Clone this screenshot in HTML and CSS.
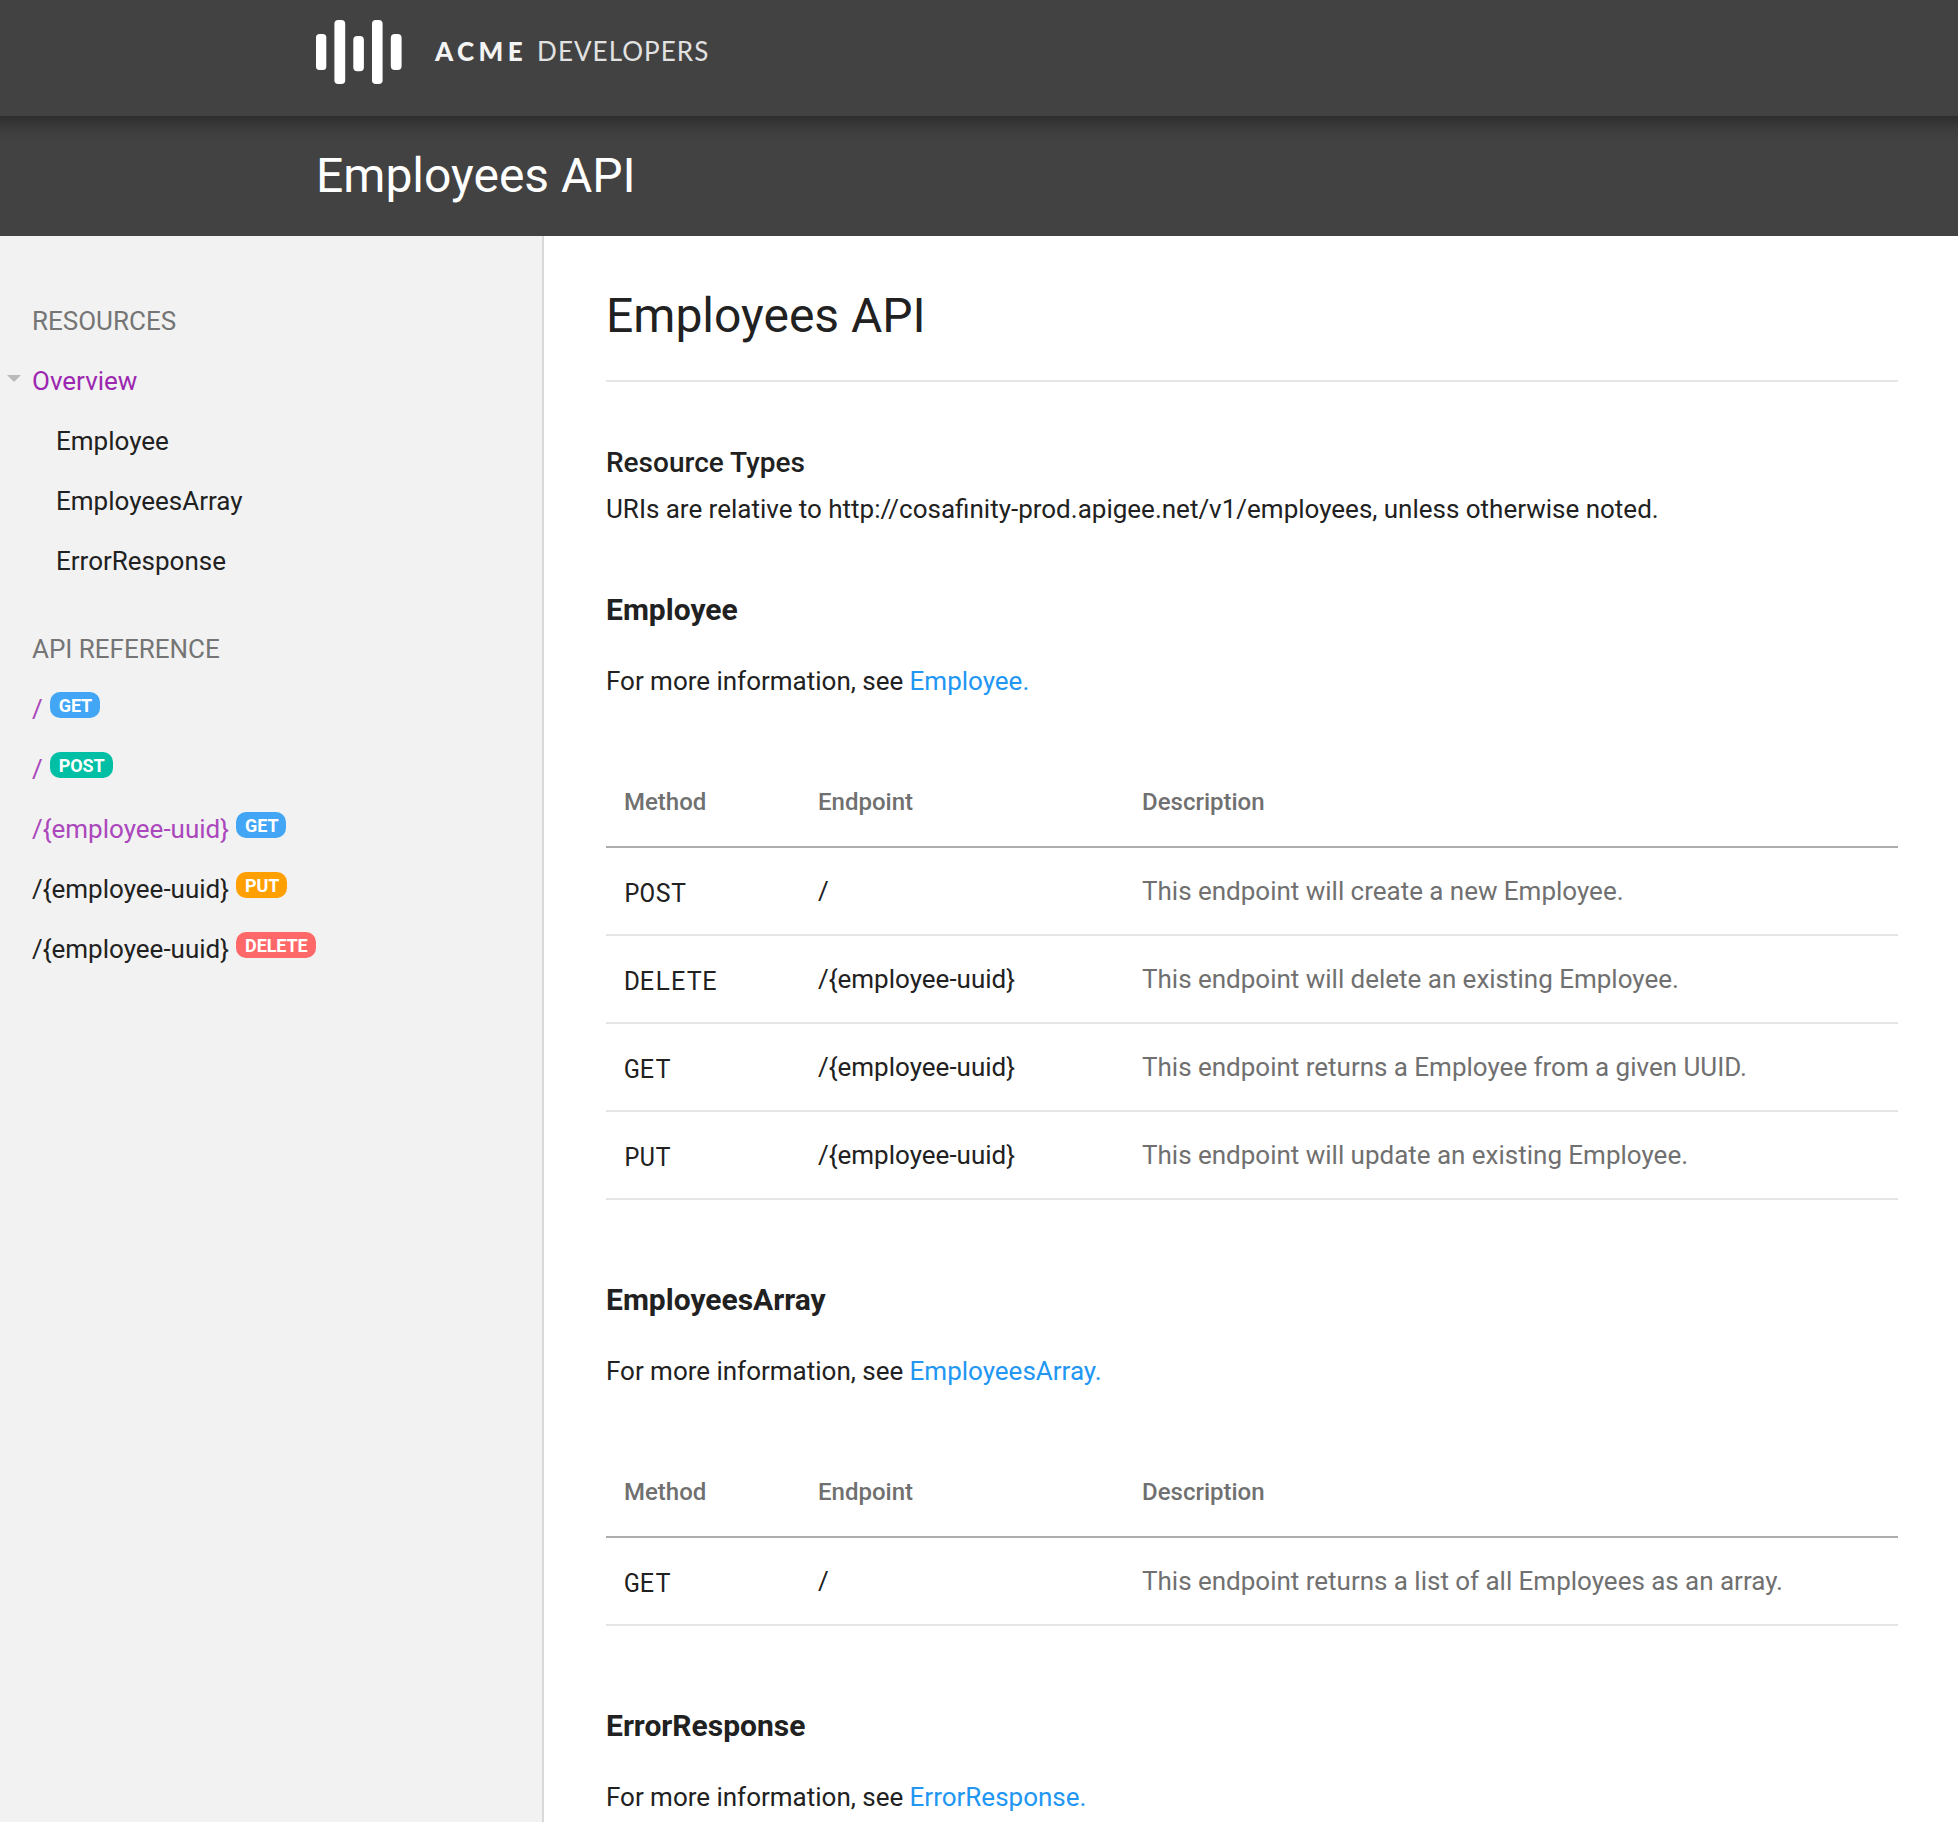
FILE: index.html
```html
<!DOCTYPE html>
<html lang="en">
<head>
<meta charset="utf-8">
<title>Employees API</title>
<link rel="stylesheet" href="styles.css">
</head>
<body>
<header class="topbar">
  <svg class="logo-mark" width="86" height="64" viewBox="0 0 86 64" fill="#fff" aria-hidden="true">
    <rect x="0" y="14" width="10.3" height="36" rx="3.5"/>
    <rect x="18.4" y="0" width="10.8" height="64" rx="3.8"/>
    <rect x="37.3" y="16" width="10.6" height="35.3" rx="4"/>
    <rect x="56" y="0" width="10.6" height="64" rx="3.8"/>
    <rect x="74.8" y="14" width="10.8" height="36" rx="4"/>
  </svg>
  <div class="wordmark"><span class="wordmark-brand">ACME</span><span class="wordmark-name">DEVELOPERS</span></div>
</header>
<div class="banner"><div class="banner-title">Employees API</div></div>
<div class="layout">
  <nav class="sidebar">
    <div class="nav-heading">RESOURCES</div>
    <a class="nav-item nav-active"><svg class="caret" width="14" height="7" viewBox="0 0 14 7" aria-hidden="true"><path d="M0 0H14L7 7Z" fill="#b9b9b9"/></svg>Overview</a>
    <a class="nav-item nav-sub">Employee</a>
    <a class="nav-item nav-sub">EmployeesArray</a>
    <a class="nav-item nav-sub">ErrorResponse</a>
    <div class="nav-heading nav-heading-api">API REFERENCE</div>
    <a class="nav-item nav-visited"><span class="path">/</span><span class="badge badge-get">GET</span></a>
    <a class="nav-item nav-visited"><span class="path">/</span><span class="badge badge-post">POST</span></a>
    <a class="nav-item nav-visited"><span class="path">/{employee-uuid}</span><span class="badge badge-get">GET</span></a>
    <a class="nav-item"><span class="path">/{employee-uuid}</span><span class="badge badge-put">PUT</span></a>
    <a class="nav-item"><span class="path">/{employee-uuid}</span><span class="badge badge-delete">DELETE</span></a>
  </nav>
  <main class="content">
    <h1 class="title">Employees API</h1>
    <h2 class="types">Resource Types</h2>
    <p class="note">URIs are relative to http://cosafinity-prod.apigee.net/v1/employees, unless otherwise noted.</p>

    <section class="resource">
      <h3 class="resource-name">Employee</h3>
      <p class="more">For more information, see <a class="link">Employee.</a></p>
      <table class="methods">
        <thead><tr><th class="col-method">Method</th><th class="col-endpoint">Endpoint</th><th>Description</th></tr></thead>
        <tbody>
          <tr><td class="verb">POST</td><td>/</td><td class="desc">This endpoint will create a new Employee.</td></tr>
          <tr><td class="verb">DELETE</td><td>/{employee-uuid}</td><td class="desc">This endpoint will delete an existing Employee.</td></tr>
          <tr><td class="verb">GET</td><td>/{employee-uuid}</td><td class="desc">This endpoint returns a Employee from a given UUID.</td></tr>
          <tr><td class="verb">PUT</td><td>/{employee-uuid}</td><td class="desc">This endpoint will update an existing Employee.</td></tr>
        </tbody>
      </table>
    </section>

    <section class="resource">
      <h3 class="resource-name">EmployeesArray</h3>
      <p class="more">For more information, see <a class="link">EmployeesArray.</a></p>
      <table class="methods">
        <thead><tr><th class="col-method">Method</th><th class="col-endpoint">Endpoint</th><th>Description</th></tr></thead>
        <tbody>
          <tr><td class="verb">GET</td><td>/</td><td class="desc">This endpoint returns a list of all Employees as an array.</td></tr>
        </tbody>
      </table>
    </section>

    <section class="resource">
      <h3 class="resource-name">ErrorResponse</h3>
      <p class="more">For more information, see <a class="link">ErrorResponse.</a></p>
    </section>
  </main>
</div>
</body>
</html>
```
FILE: styles.css
```css
* { box-sizing: border-box; }

body {
  margin: 0;
  height: 1822px;
  overflow: hidden;
  display: flex;
  flex-direction: column;
  background: #fff;
  color: #212121;
  font: 26px/40px Roboto, sans-serif;
  word-spacing: -.1px;
}

h1, h2, h3, p { margin: 0; }

/* Header */
.topbar {
  flex: none;
  height: 116px;
  padding: 20px 0 0 316px;
  display: flex;
  align-items: flex-start;
  background: #424242;
}
.logo-mark { flex: none; }
.wordmark {
  display: flex;
  gap: 10px;
  margin: 11px 0 0 33px;
  color: #f4f4f4;
  font: 26px/40px Lato, sans-serif;
}
.wordmark-brand { font-weight: 900; letter-spacing: 4.4px; }
.wordmark-name { color: #e2e2e2; letter-spacing: 1.05px; }

.banner {
  flex: none;
  height: 120px;
  padding: 32px 0 0 316px;
  background: linear-gradient(#2e2e2e, #333 5px, #3a3a3a 11px, #3f3f3f 18px, #424242 28px);
  color: #fff;
}
.banner-title { font-size: 48px; line-height: 56px; }

.layout {
  flex: 1;
  min-height: 0;
  display: flex;
}

/* Sidebar */
.sidebar {
  flex: none;
  width: 544px;
  padding: 55px 0 0 32px;
  background: #f2f2f2;
  border-right: 2px solid #d9d9d9;
}
.nav-heading { line-height: 60px; color: #757575; }
.nav-heading-api { margin-top: 28px; }
.nav-item {
  position: relative;
  display: flex;
  align-items: center;
  height: 60px;
}
.nav-active { color: #9c27b0; }
.nav-visited { color: #ab47bc; }
.nav-sub { padding-left: 24px; }
.caret { position: absolute; left: -25px; top: 24px; }
.badge {
  height: 26px;
  margin: 0 0 8px 7px;
  padding: 0 8px 0 9px;
  border-radius: 10px;
  color: #fff;
  font-size: 18px;
  font-weight: 700;
  letter-spacing: -.1px;
  line-height: 27px;
}
.badge-get { background: #42a5f5; }
.badge-post { background: #00bfa5; }
.badge-put { background: #ffa000; }
.badge-delete { background: #ff6868; }

/* Main column */
.content {
  flex: 1;
  padding: 52px 60px 0 62px;
}
.title {
  padding-bottom: 36px;
  border-bottom: 2px solid #e5e5e5;
  font-size: 48px;
  font-weight: 400;
  line-height: 56px;
}
.types {
  margin-top: 61px;
  font-size: 28px;
  font-weight: 500;
  line-height: 40px;
}
.note { margin-top: 6px; }
.resource { margin-top: 80px; }
.note + .resource { margin-top: 61px; }
.resource-name {
  font-size: 30px;
  font-weight: 700;
  line-height: 40px;
}
.more { margin-top: 31px; }
.link { color: #2196f3; }

.methods {
  width: 100%;
  margin-top: 57px;
  border-spacing: 0;
  table-layout: fixed;
}
.methods th {
  height: 90px;
  padding: 0 18px;
  border-bottom: 2px solid #adadad;
  color: #707070;
  font-size: 24px;
  font-weight: 500;
  text-align: left;
}
.methods td {
  height: 88px;
  padding: 0 18px;
  border-bottom: 2px solid #e5e5e5;
}
.methods .col-method { width: 194px; }
.methods .col-endpoint { width: 324px; }
.methods .verb {
  padding-top: 2px;
  font-family: "Roboto Mono", "Liberation Mono", monospace;
}
.methods .desc { color: #707070; }
```
